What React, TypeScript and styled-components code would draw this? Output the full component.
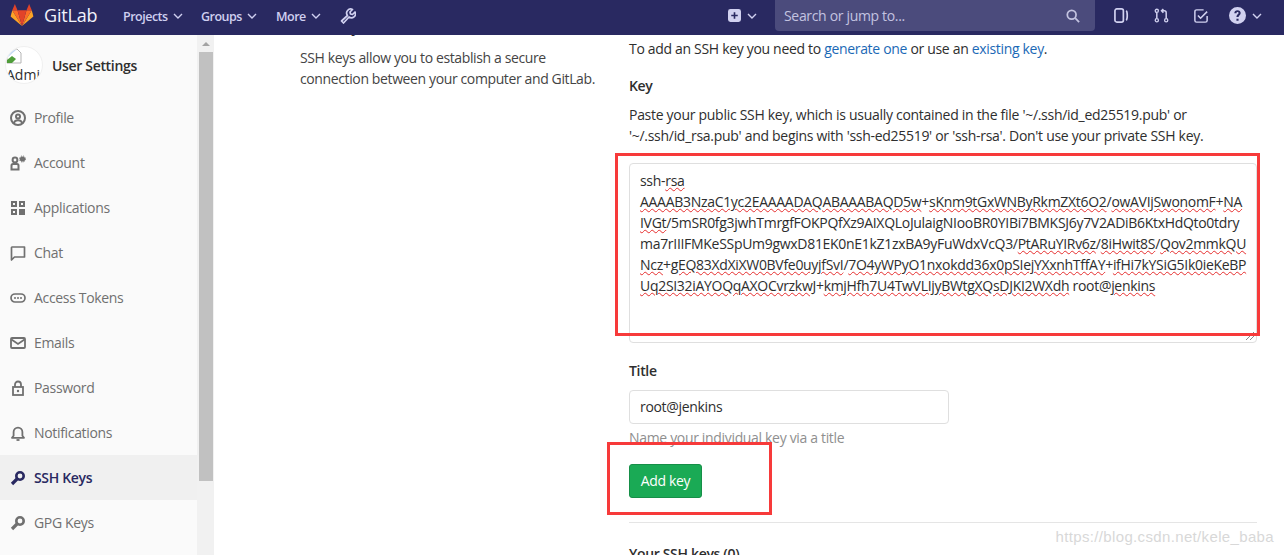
import { FC, ReactNode } from 'react';
import styled, { createGlobalStyle } from 'styled-components';

const GlobalStyle = createGlobalStyle`
  html, body {
    margin: 0;
    padding: 0;
    background: #fff;
  }
  body {
    font-family: "Open Sans", "Noto Sans", sans-serif;
    font-size: 14px;
    line-height: 21px;
    color: #2e2e2e;
    letter-spacing: -0.33px;
  }
`;

const Page = styled.div`
  position: relative;
  width: 1284px;
  height: 555px;
  overflow: hidden;
  display: flex;
  flex-direction: column;
`;

const Navbar = styled.header`
  flex: 0 0 35px;
  height: 35px;
  background: #292961;
  display: flex;
  align-items: flex-start;
  color: #d1d1f0;
  z-index: 2;
`;

const Brand = styled.div`
  display: flex;
  align-items: center;
  gap: 10px;
  height: 31px;
  padding-left: 10px;
  width: 123px;
  box-sizing: border-box;
  font-size: 18px;
  color: #f2f2fa;
  letter-spacing: -0.2px;
`;

const NavMenu = styled.div<{ $width: number }>`
  width: ${({ $width }) => $width}px;
  height: 32px;
  display: flex;
  align-items: center;
  gap: 5px;
  font-size: 12.5px;
  font-weight: 600;
  color: #cfcff0;
  letter-spacing: -0.5px;
`;

const Spacer = styled.div`
  flex: 1;
`;

const IconSlot = styled.div<{ $width: number }>`
  width: ${({ $width }) => $width}px;
  height: 31px;
  display: flex;
  align-items: center;
  gap: 6px;
  color: #d1d1f0;
`;

const Search = styled.div`
  width: 320px;
  height: 31px;
  margin-right: 19px;
  box-sizing: border-box;
  padding: 0 15px 0 9px;
  border-radius: 0 0 4px 4px;
  background: #4b4b7c;
  display: flex;
  align-items: center;
  justify-content: space-between;
  color: #c3c3e0;
  font-size: 14px;
`;

const Body = styled.div`
  flex: 1;
  display: flex;
  min-height: 0;
`;

const Sidebar = styled.aside`
  width: 197px;
  flex: none;
  background: #fafafa;
`;

const SidebarHeader = styled.div`
  height: 60px;
  box-sizing: border-box;
  padding: 11px 0 0 5px;
  display: flex;
  align-items: flex-start;
  gap: 9px;
`;

const Avatar = styled.div`
  width: 38px;
  height: 38px;
  box-sizing: border-box;
  flex: none;
  border-radius: 50%;
  border: 1px solid #f0f0f0;
  background: #fff;
  overflow: hidden;
  font-size: 14px;
  line-height: 16px;
  color: #2e2e2e;
  letter-spacing: 0;
  white-space: nowrap;
  padding-top: 1px;

  svg {
    display: block;
    margin-bottom: 3px;
  }
`;

const ProjectName = styled.div`
  font-weight: 600;
  color: #2e2e2e;
  padding-top: 9px;
`;

const MenuItem = styled.div<{ $active?: boolean }>`
  height: 45px;
  box-sizing: border-box;
  padding-left: 10px;
  display: flex;
  align-items: center;
  gap: 8px;
  background: ${({ $active }) => ($active ? '#f0f0f0' : 'transparent')};
  color: ${({ $active }) => ($active ? '#292961' : '#707070')};
  font-weight: ${({ $active }) => ($active ? 600 : 400)};
`;

const Scrollbar = styled.div`
  width: 17px;
  flex: none;
  background: #f1f1f1;
  display: flex;
  flex-direction: column;
  align-items: center;
`;

const ScrollArrow = styled.div`
  height: 17px;
  width: 100%;
  display: flex;
  align-items: center;
  justify-content: center;

  &::before {
    content: '';
    border-left: 4px solid transparent;
    border-right: 4px solid transparent;
    border-bottom: 4px solid #a3a3a3;
  }
`;

const ScrollThumb = styled.div`
  width: 14px;
  height: 429px;
  background: #c1c1c1;
`;

const Main = styled.main`
  flex: 1;
  min-width: 0;
  overflow: hidden;
  display: flex;
  padding-left: 86px;
`;

const Intro = styled.section`
  width: 329px;
  flex: none;
`;

const Heading = styled.h4`
  margin: -19px 0 10px;
  font-size: 16px;
  line-height: 21px;
  font-weight: 600;
`;

const IntroText = styled.p`
  margin: 0;
  width: 310px;
  color: #444;
  letter-spacing: -0.38px;
`;

const Form = styled.section`
  width: 628px;
  flex: none;
  padding-top: 3px;
`;

const Paragraph = styled.p`
  margin: 0 0 16px;
  white-space: nowrap;
  color: #2e2e2e;
  letter-spacing: -0.32px;
`;

const Link = styled.a`
  color: #1b69b6;
`;

const Label = styled.label<{ $gap?: number }>`
  display: block;
  font-weight: 600;
  margin-bottom: ${({ $gap }) => $gap ?? 8}px;
`;

const Hint = styled.p`
  margin: 0 0 17px;
  white-space: nowrap;
  color: #2e2e2e;
  letter-spacing: -0.29px;
`;

const KeyBox = styled.div`
  position: relative;
  height: 180px;
  box-sizing: border-box;
  margin-bottom: 17px;
  padding: 6px 10px;
  border: 1px solid #dfdfdf;
  border-radius: 4px;
  background: #fff;
  color: #2e2e2e;
  letter-spacing: -0.3px;
`;

const KeyLine = styled.div`
  white-space: nowrap;
`;

const Typo = styled.span`
  text-decoration: underline wavy #e62e2e 1px;
  text-underline-offset: 1px;
`;

const Resize = styled.svg`
  position: absolute;
  right: 1px;
  bottom: 1px;
`;

const TitleInput = styled.div`
  width: 320px;
  height: 34px;
  box-sizing: border-box;
  padding: 5px 10px 6px;
  border: 1px solid #dfdfdf;
  border-radius: 4px;
  color: #2e2e2e;
`;

const Help = styled.p`
  margin: 3px 0 16px;
  color: #8f8f8f;
`;

const SubmitButton = styled.button`
  display: block;
  width: 73px;
  height: 34px;
  padding: 0 0 2px;
  border: 1px solid #168f48;
  border-radius: 3px;
  background: #1aaa55;
  color: #fff;
  font: inherit;
  letter-spacing: inherit;
  font-weight: 500;
`;

const Divider = styled.hr`
  margin: 24px 0 20px;
  border: 0;
  border-top: 1px solid #e5e5e5;
`;

const KeysHeading = styled.h5`
  margin: 0;
  font-size: 14px;
  line-height: 21px;
  font-weight: 600;
`;

const Callout = styled.div<{ $left: number; $top: number; $width: number; $height: number }>`
  position: absolute;
  left: ${({ $left }) => $left}px;
  top: ${({ $top }) => $top}px;
  width: ${({ $width }) => $width}px;
  height: ${({ $height }) => $height}px;
  box-sizing: border-box;
  border: 3px solid #f73a3a;
  pointer-events: none;
`;

const Watermark = styled.div`
  position: absolute;
  right: 10px;
  bottom: 8px;
  font-family: "Liberation Sans", sans-serif;
  font-size: 15px;
  letter-spacing: 0.35px;
  line-height: 20px;
  color: #d8d8d8;
`;

const Icon: FC<{ size?: number; children: ReactNode; fill?: boolean }> = ({ size = 16, children, fill }) => (
  <svg
    width={size}
    height={size}
    viewBox="0 0 16 16"
    fill={fill ? 'currentColor' : 'none'}
    stroke={fill ? 'none' : 'currentColor'}
    strokeWidth="2"
    style={{ flex: 'none' }}
  >
    {children}
  </svg>
);

const Chevron = () => (
  <svg width="10" height="10" viewBox="0 0 10 10" fill="none" stroke="currentColor" strokeWidth="1.4">
    <path d="M1 3l4 4 4-4" />
  </svg>
);

const Logo = () => (
  <svg width="24" height="23" viewBox="0 0 32 26" preserveAspectRatio="none" style={{ flex: 'none' }}>
    <path d="M16 25L.8 14 3 7z" fill="#fca326" />
    <path d="M16 25L31.2 14 29 7z" fill="#fca326" />
    <path d="M16 25L3 7h7z" fill="#fc6d26" />
    <path d="M16 25L29 7h-7z" fill="#fc6d26" />
    <path d="M16 25L10 7h12z" fill="#e24329" />
    <path d="M3 7L6.500 0 10 7z" fill="#e24329" />
    <path d="M29 7L25.500 0 22 7z" fill="#e24329" />
  </svg>
);

const KeyGlyph = () => (
  <Icon>
    <circle cx="10" cy="6" r="3.700" strokeWidth="2.600" />
    <path d="M7.500 8.500L2 14" strokeWidth="3.200" />
  </Icon>
);

const menu: { label: string; active?: boolean; icon: ReactNode }[] = [
  {
    label: 'Profile',
    icon: (
      <Icon>
        <circle cx="8" cy="8" r="7" />
        <circle cx="8" cy="6.500" r="2" />
        <path d="M3.800 13c.8-2 2.400-2.800 4.200-2.800s3.400.8 4.200 2.800" />
      </Icon>
    ),
  },
  {
    label: 'Account',
    icon: (
      <Icon>
        <circle cx="5" cy="5" r="2.400" strokeWidth="2" />
        <path d="M1.500 14.500V10.500c0-.8.500-1.500 1.500-1.500h4c1 0 1.500.7 1.500 1.500v4z" strokeWidth="2" />
        <circle cx="12.500" cy="4" r="2.600" fill="currentColor" stroke="none" />
        <circle cx="12.500" cy="4" r="3" strokeWidth="1" strokeDasharray="1.200 1.200" />
      </Icon>
    ),
  },
  {
    label: 'Applications',
    icon: (
      <Icon>
        <rect x="2" y="2" width="4" height="4" strokeWidth="2" />
        <rect x="10" y="2" width="4" height="4" strokeWidth="2" />
        <rect x="2" y="10" width="4" height="4" strokeWidth="2" />
        <rect x="9.500" y="9.500" width="5" height="5" fill="currentColor" strokeWidth="1" />
      </Icon>
    ),
  },
  {
    label: 'Chat',
    icon: (
      <Icon>
        <path d="M2 2h12.500v10H4.500L1.500 15V2.500z" strokeWidth="1.700" strokeLinejoin="round" />
      </Icon>
    ),
  },
  {
    label: 'Access Tokens',
    icon: (
      <Icon>
        <rect x="1" y="4" width="14" height="8" rx="4" strokeWidth="1.700" />
        <circle cx="5" cy="8" r="1" fill="currentColor" stroke="none" />
        <circle cx="8" cy="8" r="1" fill="currentColor" stroke="none" />
        <circle cx="11" cy="8" r="1" fill="currentColor" stroke="none" />
      </Icon>
    ),
  },
  {
    label: 'Emails',
    icon: (
      <Icon>
        <rect x="1" y="3" width="14" height="10" rx="1" strokeWidth="1.800" />
        <path d="M1.500 4.500L8 9l6.500-4.500" strokeWidth="1.800" />
      </Icon>
    ),
  },
  {
    label: 'Password',
    icon: (
      <Icon>
        <path d="M5 7V4.500a3 3 0 0 1 6 0V7" strokeWidth="1.800" />
        <rect x="3" y="7" width="10" height="8" strokeWidth="1.800" />
        <circle cx="8" cy="11" r="1.200" fill="currentColor" stroke="none" />
      </Icon>
    ),
  },
  {
    label: 'Notifications',
    icon: (
      <Icon>
        <path d="M2 12.800h12l-1.600-2V7a4.400 4.400 0 0 0-8.800 0v3.800z" strokeWidth="1.800" strokeLinejoin="round" />
        <path d="M6.500 15h3" strokeWidth="1.800" />
      </Icon>
    ),
  },
  { label: 'SSH Keys', active: true, icon: <KeyGlyph /> },
  { label: 'GPG Keys', icon: <KeyGlyph /> },
];

export default function App() {
  return (
    <Page>
      <GlobalStyle />
      <Navbar>
        <Brand>
          <Logo />
          GitLab
        </Brand>
        <NavMenu $width={78}>
          Projects <Chevron />
        </NavMenu>
        <NavMenu $width={75}>
          Groups <Chevron />
        </NavMenu>
        <NavMenu $width={64}>
          More <Chevron />
        </NavMenu>
        <IconSlot $width={20}>
          <Icon>
            <path
              d="M1.500 13L7.500 7.500a4 4 0 0 1 5-6L10 4l.5 2 2 .5L15 4a4 4 0 0 1-6 5l-5.500 6z"
              strokeWidth="1.700"
              strokeLinejoin="round"
            />
          </Icon>
        </IconSlot>
        <Spacer />
        <IconSlot $width={47}>
          <Icon size={13} fill>
            <path
              fillRule="evenodd"
              d="M3 0h10a3 3 0 0 1 3 3v10a3 3 0 0 1-3 3H3a3 3 0 0 1-3-3V3a3 3 0 0 1 3-3zm4 4v3H4v2h3v3h2V9h3V7H9V4z"
            />
          </Icon>
          <Chevron />
        </IconSlot>
        <Search>
          Search or jump to...
          <Icon size={14}>
            <circle cx="6.500" cy="6.500" r="5" />
            <path d="M10.500 10.500L15 15" />
          </Icon>
        </Search>
        <IconSlot $width={40}>
          <Icon size={15}>
            <rect x="1" y="1" width="9" height="14" rx="2" strokeWidth="1.800" />
            <path d="M13 3c1.500 1 1.500 9 0 10" strokeWidth="1.800" />
          </Icon>
        </IconSlot>
        <IconSlot $width={40}>
          <Icon size={15}>
            <circle cx="3" cy="13" r="1.700" strokeWidth="1.400" />
            <circle cx="13" cy="13" r="1.700" strokeWidth="1.400" />
            <circle cx="3" cy="3" r="1.700" strokeWidth="1.400" />
            <path d="M3 5v6M13 11V5c0-1.500-1-2-2-2H8m2-2L8 3l2 2" strokeWidth="1.600" />
          </Icon>
        </IconSlot>
        <IconSlot $width={35}>
          <Icon size={14}>
            <path d="M15 8v5a2 2 0 0 1-2 2H3a2 2 0 0 1-2-2V3a2 2 0 0 1 2-2h8" strokeWidth="1.700" />
            <path d="M4.500 7.500L7.500 10.500 15 3" strokeWidth="1.800" />
          </Icon>
        </IconSlot>
        <IconSlot $width={55}>
          <Icon size={17} fill>
            <path
              fillRule="evenodd"
              d="M8 0a8 8 0 1 1 0 16A8 8 0 0 1 8 0zM7 11v2h2v-2zM8 3C6.200 3 5 4.100 5 5.800h2c0-.6.400-1 1-1s1 .4 1 .9c0 1.100-2 1.300-2 3.800h2c0-1.600 2-2 2-3.900C11 4.100 9.800 3 8 3z"
            />
          </Icon>
          <Chevron />
        </IconSlot>
      </Navbar>
      <Body>
        <Sidebar>
          <SidebarHeader>
            <Avatar>
              <svg width="16" height="16" viewBox="0 0 16 16">
                <path d="M1 1h10l4 4v10H1z" fill="#fff" stroke="#b5b5b5" />
                <path d="M1 12l5-4 4 3-4 4H1z" fill="#4f9d3a" />
                <path d="M1 7l4-5h5L2 9z" fill="#c4d9f2" />
              </svg>
              Admi
            </Avatar>
            <ProjectName>User Settings</ProjectName>
          </SidebarHeader>
          {menu.map(({ label, active, icon }) => (
            <MenuItem key={label} $active={active}>
              {icon}
              {label}
            </MenuItem>
          ))}
        </Sidebar>
        <Scrollbar>
          <ScrollArrow />
          <ScrollThumb />
        </Scrollbar>
        <Main>
          <Intro>
            <Heading>SSH Keys</Heading>
            <IntroText>SSH keys allow you to establish a secure connection between your computer and GitLab.</IntroText>
          </Intro>
          <Form>
            <Paragraph>
              To add an SSH key you need to <Link>generate one</Link> or use an <Link>existing key</Link>.
            </Paragraph>
            <Label>Key</Label>
            <Hint>
              Paste your public SSH key, which is usually contained in the file '~/.ssh/id_ed25519.pub' or
              <br />
              '~/.ssh/id_rsa.pub' and begins with 'ssh-ed25519' or 'ssh-rsa'. Don't use your private SSH key.
            </Hint>
            <KeyBox>
              <KeyLine>
                ssh-<Typo>rsa</Typo>
              </KeyLine>
              <KeyLine>
                <Typo>AAAAB3NzaC1yc2EAAAADAQABAAABAQD5w</Typo>+<Typo>sKnm9tGxWNByRkmZXt6O2</Typo>/<Typo>owAVIjSwonomF</Typo>+
                <Typo>NA</Typo>
              </KeyLine>
              <KeyLine>
                <Typo>IVGt</Typo>/5mSR0fg3jwhTmrgfFOKPQfXz9AIXQLoJulaigNIooBR0YIBi7BMKSJ6y7V2ADiB6KtxHdQto0tdry
              </KeyLine>
              <KeyLine>
                ma7rIIIFMKeSSpUm9gwxD81EK0nE1kZ1zxBA9yFuWdxVcQ3/<Typo>PtARuYIRv6z</Typo>/<Typo>8iHwit8S</Typo>/
                <Typo>Qov2mmkQU</Typo>
              </KeyLine>
              <KeyLine>
                <Typo>Ncz</Typo>+<Typo>gEQ83XdXiXW0BVfe0uyjfSvI</Typo>/<Typo>7O4yWPyO1nxokdd36x0pSIejYXxnhTffAY</Typo>+
                <Typo>ifHi7kYSiG5Ik0ieKeBP</Typo>
              </KeyLine>
              <KeyLine>
                <Typo>Uq2SI32iAYOQqAXOCvrzkwJ</Typo>+<Typo>kmjHfh7U4TwVLIjyBWtgXQsDJKI2WXdh</Typo> root@<Typo>jenkins</Typo>
              </KeyLine>
              <Resize width="10" height="10" viewBox="0 0 10 10" stroke="#8a8a8a" strokeWidth="1">
                <path d="M1 9l8-8M5 9l4-4" />
              </Resize>
            </KeyBox>
            <Label $gap={9}>Title</Label>
            <TitleInput>root@jenkins</TitleInput>
            <Help>Name your individual key via a title</Help>
            <SubmitButton>Add key</SubmitButton>
            <Divider />
            <KeysHeading>Your SSH keys (0)</KeysHeading>
          </Form>
        </Main>
      </Body>
      <Callout $left={615} $top={153} $width={645} $height={183} />
      <Callout $left={607} $top={442} $width={165} $height={73} />
      <Watermark>https://blog.csdn.net/kele_baba</Watermark>
    </Page>
  );
}
